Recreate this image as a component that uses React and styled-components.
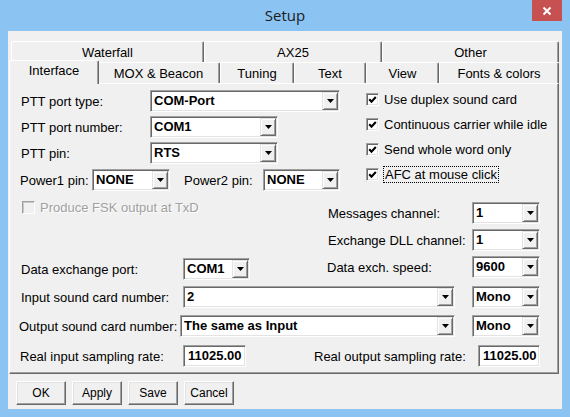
import React from 'react';
import styled, { createGlobalStyle } from 'styled-components';

const Global = createGlobalStyle`
  html, body { margin: 0; padding: 0; }
  body {
    width: 570px; height: 417px; overflow: hidden;
    font-family: "Liberation Sans", Arial, sans-serif;
    background: #8bc4f3;
  }
`;

const Window = styled.div`
  width: 570px; height: 417px; box-sizing: border-box;
  background: #8bc4f3;
  display: flex; flex-direction: column;
  padding: 0 8px 8px 8px;
`;

const TitleBar = styled.div`
  height: 31px; flex: none;
  display: grid; grid-template-columns: 1fr auto 1fr; align-items: start;
`;

const Title = styled.div`
  grid-column: 2;
  font-family: "Open Sans", "Noto Sans", sans-serif;
  font-size: 15px; line-height: 30px; color: #1b1b1b;
`;

const CloseButton = styled.div`
  grid-column: 3; justify-self: end;
  width: 30px; height: 21px; background: #c75050;
  display: flex; align-items: center; justify-content: center;
`;

const Client = styled.div`
  flex: 1; background: #f0f0f0;
  display: flex; flex-direction: column;
  padding: 10px 3px 0 1px;
`;

const TabRow = styled.div`
  display: flex; height: 21px; padding-left: 2px;
  align-items: flex-end;
`;

const Tab = styled.div`
  flex: none; box-sizing: border-box;
  width: ${p => p.$w + (p.$active ? 4 : 0)}px;
  height: ${p => (p.$active ? 24 : 21)}px;
  margin: 0 ${p => (p.$active ? -2 : 0)}px ${p => (p.$active ? -1 : 0)}px;
  position: ${p => (p.$active ? 'relative' : 'static')};
  z-index: ${p => (p.$active ? 2 : 'auto')};
  background: #f0f0f0;
  border-top: 1px solid #fff; border-left: 1px solid #fff;
  border-right: 1px solid #696969;
  border-radius: 2px 2px 0 0;
  box-shadow: inset -1px 0 #a0a0a0;
  font-size: 13px; color: #000;
  display: flex; justify-content: center;
  padding-top: ${p => (p.$active ? 2 : 3)}px;
  white-space: nowrap;
`;

const Panel = styled.div`
  box-sizing: border-box; width: 550px; height: 291px; flex: none;
  border-top: 1px solid #fff; border-left: 1px solid #fff;
  border-right: 1px solid #696969; border-bottom: 1px solid #696969;
  box-shadow: inset -1px -1px #a0a0a0;
  padding: 6px 18px 0 11px;
  display: flex; flex-direction: column;
`;

const TopSection = styled.div`
  display: flex; gap: 26px; align-items: flex-start;
`;

const LeftCol = styled.div`
  width: 319px; display: flex; flex-direction: column; gap: 4px;
`;

const CheckCol = styled.div`
  display: flex; flex-direction: column; gap: 7px;
`;

const FieldRow = styled.div`
  display: flex; align-items: center; height: 22px;
  margin-top: ${p => p.$mt || 0}px;
`;

const Row = styled.div`
  display: flex; align-items: flex-start;
  justify-content: ${p => p.$between ? 'space-between' : 'flex-start'};
  margin-top: ${p => p.$mt || 0}px;
`;

const Group = styled.div`
  display: flex; align-items: center; height: 22px;
  margin-top: ${p => p.$mt || 0}px;
  margin-left: ${p => p.$ml || 0}px;
`;

const Stack = styled.div`
  display: flex; flex-direction: column; gap: 5px;
  margin-top: ${p => p.$mt || 0}px;
`;

const Label = styled.span`
  flex: none; box-sizing: border-box;
  width: ${p => (p.$w ? p.$w + 'px' : 'auto')};
  margin-left: ${p => p.$ml || 0}px;
  font-size: 13px; color: #000; white-space: nowrap;
`;

const Sunken = styled.div`
  flex: none; box-sizing: border-box;
  width: ${p => p.$w}px; height: 22px;
  margin-left: ${p => p.$ml || 0}px;
  background: #fff;
  border: 1px solid; border-color: #a0a0a0 #fff #fff #a0a0a0;
  box-shadow: inset 1px 1px #696969, inset -1px -1px #e3e3e3;
  padding: 1px;
  display: flex; align-items: stretch;
`;

const FieldText = styled.div`
  flex: 1; font-size: 13px; font-weight: bold; color: #000;
  line-height: 18px; padding-left: ${p => p.$pl ?? 2}px;
  white-space: nowrap; overflow: hidden;
`;

const DropButton = styled.div`
  flex: none; width: 16px; box-sizing: border-box;
  background: #f0f0f0;
  border: 1px solid; border-color: #e3e3e3 #696969 #696969 #e3e3e3;
  box-shadow: inset 1px 1px #fff, inset -1px -1px #a0a0a0;
  display: flex; align-items: center; justify-content: center;
`;

const CheckRow = styled.label`
  display: flex; align-items: center; gap: 5px; height: ${p => p.$h || 18}px;
  margin-top: ${p => p.$mt || 0}px;
  margin-left: ${p => p.$ml || 0}px;
  font-size: 13px;
  color: ${p => (p.$disabled ? '#a0a0a0' : '#000')};
  text-shadow: ${p => (p.$disabled ? '1px 1px #fff' : 'none')};
  white-space: nowrap;
`;

const Box = styled.span`
  flex: none; box-sizing: border-box; width: 13px; height: 13px;
  background: ${p => (p.$disabled ? '#f0f0f0' : '#fff')};
  border: 1px solid; border-color: #a0a0a0 #fff #fff #a0a0a0;
  box-shadow: ${p => (p.$disabled ? 'inset 1px 1px #c8c8c8' : 'inset 1px 1px #696969, inset -1px -1px #e3e3e3')};
  display: flex; align-items: center; justify-content: center;
`;

const Focus = styled.span`
  outline: 1px dotted #000; outline-offset: 0; padding: 0 1px;
  line-height: 15px;
`;

const ButtonBar = styled.div`
  display: flex; gap: 6px; margin: 7px 0 0 7px;
`;

const Button = styled.div`
  box-sizing: border-box; width: 50px; height: 24px;
  background: #f0f0f0;
  border: 1px solid; border-color: #fff #696969 #696969 #fff;
  box-shadow: inset -1px -1px #a0a0a0, inset 1px 1px #e3e3e3;
  font-size: 12px; color: #000;
  display: flex; align-items: center; justify-content: center;
`;

function Combo({ w, value, ml }) {
  return (
    <Sunken $w={w} $ml={ml}>
      <FieldText>{value}</FieldText>
      <DropButton>
        <svg width="7" height="4" viewBox="0 0 7 4">
          <polygon points="0,0 7,0 3.5,4" fill="#000" />
        </svg>
      </DropButton>
    </Sunken>
  );
}

function Edit({ w, value, ml }) {
  return (
    <Sunken $w={w} $ml={ml}>
      <FieldText $pl={3}>{value}</FieldText>
    </Sunken>
  );
}

function Check({ children, disabled, checked = true, ...rest }) {
  return (
    <CheckRow $disabled={disabled} {...rest}>
      <Box $disabled={disabled}>
        {checked && (
          <svg width="9" height="9" viewBox="0 0 9 9">
            <path d="M1.2 4.2 L3.5 6.6 L7.8 2" stroke="#000" strokeWidth="2.1" fill="none" />
          </svg>
        )}
      </Box>
      {children}
    </CheckRow>
  );
}

const topTabs = [
  { label: 'Waterfall', w: 193 },
  { label: 'AX25', w: 178 },
  { label: 'Other', w: 177 },
];
const bottomTabs = [
  { label: 'Interface', w: 86, active: true },
  { label: 'MOX & Beacon', w: 123 },
  { label: 'Tuning', w: 74 },
  { label: 'Text', w: 72 },
  { label: 'View', w: 73 },
  { label: 'Fonts & colors', w: 120 },
];

export default function App() {
  return (
    <>
      <Global />
      <Window>
        <TitleBar>
          <Title>Setup</Title>
          <CloseButton>
            <svg width="10" height="10" viewBox="0 0 10 10">
              <path d="M1.5 1.5 L8.5 8.5 M8.5 1.5 L1.5 8.5" stroke="#fff" strokeWidth="2" />
            </svg>
          </CloseButton>
        </TitleBar>
        <Client>
          <TabRow>
            {topTabs.map(t => (
              <Tab key={t.label} $w={t.w}>{t.label}</Tab>
            ))}
          </TabRow>
          <TabRow>
            {bottomTabs.map(t => (
              <Tab key={t.label} $w={t.w} $active={t.active}>{t.label}</Tab>
            ))}
          </TabRow>
          <Panel>
            <TopSection>
              <LeftCol>
                <FieldRow>
                  <Label $w={129}>PTT port type:</Label>
                  <Combo w={190} value="COM-Port" />
                </FieldRow>
                <FieldRow>
                  <Label $w={129}>PTT port number:</Label>
                  <Combo w={128} value="COM1" />
                </FieldRow>
                <FieldRow>
                  <Label $w={129}>PTT pin:</Label>
                  <Combo w={128} value="RTS" />
                </FieldRow>
                <FieldRow $mt={1}>
                  <Label $w={72} $ml={-1}>Power1 pin:</Label>
                  <Combo w={78} value="NONE" />
                  <Label $w={79} $ml={14}>Power2 pin:</Label>
                  <Combo w={77} value="NONE" />
                </FieldRow>
              </LeftCol>
              <CheckCol>
                <Check>Use duplex sound card</Check>
                <Check>Continuous carrier while idle</Check>
                <Check>Send whole word only</Check>
                <Check><Focus>AFC at mouse click</Focus></Check>
              </CheckCol>
            </TopSection>

            <Row $between>
              <Check disabled checked={false} $mt={8} $ml={1} $h={16}>Produce FSK output at TxD</Check>
              <Stack $mt={11}>
                <Group>
                  <Label $w={144}>Messages channel:</Label>
                  <Combo w={68} value="1" />
                </Group>
                <Group>
                  <Label $w={144}>Exchange DLL channel:</Label>
                  <Combo w={68} value="1" />
                </Group>
              </Stack>
            </Row>

            <Row $between $mt={5}>
              <Group $mt={2}>
                <Label $w={162}>Data exchange port:</Label>
                <Combo w={67} value="COM1" />
              </Group>
              <Group>
                <Label $w={145}>Data exch. speed:</Label>
                <Combo w={68} value="9600" />
              </Group>
            </Row>

            <Row $mt={6}>
              <Group>
                <Label $w={162}>Input sound card number:</Label>
                <Combo w={272} value="2" />
                <Combo w={68} value="Mono" ml={17} />
              </Group>
            </Row>

            <Row $mt={7}>
              <Group $ml={-2}>
                <Label $w={161}>Output sound card number:</Label>
                <Combo w={275} value="The same as Input" />
                <Combo w={68} value="Mono" ml={17} />
              </Group>
            </Row>

            <Row $mt={8}>
              <Group $ml={-1}>
                <Label $w={163}>Real input sampling rate:</Label>
                <Edit w={63} value="11025.00" />
                <Label $w={164} $ml={68}>Real output sampling rate:</Label>
                <Edit w={62} value="11025.00" />
              </Group>
            </Row>
          </Panel>
          <ButtonBar>
            <Button>OK</Button>
            <Button>Apply</Button>
            <Button>Save</Button>
            <Button>Cancel</Button>
          </ButtonBar>
        </Client>
      </Window>
    </>
  );
}
